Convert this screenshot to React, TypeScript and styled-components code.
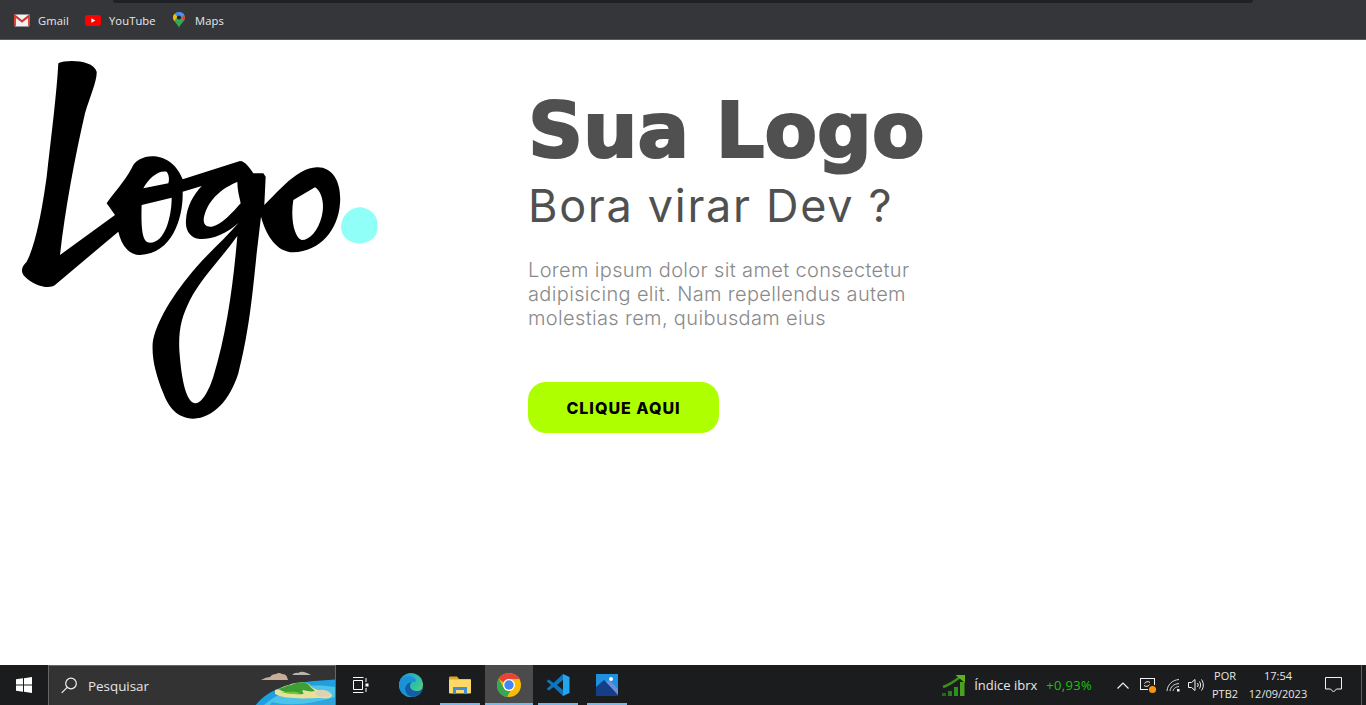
import styled, { createGlobalStyle } from "styled-components";

const GlobalStyle = createGlobalStyle`
  * { box-sizing: border-box; }
  html, body { margin: 0; height: 100%; background: #fff; }
  #root { height: 100%; }
`;

const Screen = styled.div`
  height: 705px;
  display: flex;
  flex-direction: column;
  overflow: hidden;
  font-family: "Open Sans", "Noto Sans", sans-serif;
`;

/* browser chrome */
const BrowserBar = styled.div`
  height: 40px;
  background: #35363a;
  border-bottom: 1px solid #5b5c60;
  display: flex;
  flex-direction: column;
`;
const OmniboxEdge = styled.div`
  height: 3px;
  margin: 0 113px;
  background: #202124;
  border-radius: 0 0 6px 6px;
`;
const Bookmarks = styled.div`
  flex: 1;
  display: flex;
  align-items: center;
  padding: 0 0 2px 14px;
`;
const Bookmark = styled.div<{ $width: number }>`
  width: ${(p) => p.$width}px;
  display: flex;
  align-items: center;
  gap: 8px;
  color: #e8eaed;
  font-size: 11.2px;
  letter-spacing: 0.1px;
`;
const BookmarkIcon = styled.span`
  width: 16px;
  display: flex;
  justify-content: center;
`;

/* page */
const Main = styled.main`
  flex: 1;
  display: flex;
  background: #fff;
`;
const LogoColumn = styled.div`
  width: 528px;
  padding-top: 10px;
`;
const Hero = styled.section`
  width: 410px;
  padding-top: 43px;
  font-family: Inter, "Liberation Sans", sans-serif;
`;
const Title = styled.h1`
  margin: 0;
  font-family: "DejaVu Sans", sans-serif;
  font-size: 76.5px;
  line-height: 96px;
  font-weight: 700;
  color: #505050;
  -webkit-text-stroke: 2.2px #505050;
  white-space: nowrap;
`;
const Subtitle = styled.h2`
  margin: 0;
  font-size: 45px;
  line-height: 54px;
  font-weight: 400;
  color: #505050;
  letter-spacing: 1.7px;
  white-space: nowrap;
`;
const Lorem = styled.p`
  margin: 25px 0 0;
  font-size: 20px;
  line-height: 24px;
  font-weight: 300;
  color: #8a8a8a;
  letter-spacing: 0.35px;
  white-space: nowrap;
`;
const Cta = styled.button`
  display: block;
  margin-top: 52px;
  width: 191px;
  height: 51px;
  border: 0;
  border-radius: 18px;
  background: #aeff00;
  color: #000;
  font-family: inherit;
  font-size: 16px;
  font-weight: 800;
  letter-spacing: 1px;
`;

/* windows taskbar */
const Taskbar = styled.footer`
  height: 40px;
  background: #1b1c1d;
  display: flex;
  align-items: stretch;
  color: #f2f2f2;
`;
const StartButton = styled.div`
  width: 48px;
  display: flex;
  align-items: center;
  justify-content: center;
`;
const SearchBox = styled.div`
  width: 288px;
  background: #333333;
  border: 1px solid #666;
  border-bottom: 0;
  display: flex;
  align-items: center;
  gap: 11px;
  padding-left: 12px;
  font-size: 13.4px;
  color: #e6e6e6;
  position: relative;
  overflow: hidden;
`;
const SearchArt = styled.svg`
  position: absolute;
  right: 0;
  top: 0;
`;
const TaskView = styled.div`
  width: 48px;
  display: flex;
  align-items: center;
  justify-content: center;
`;
const Apps = styled.div`
  display: flex;
  margin-left: 3px;
  gap: 1px;
`;
const AppSlot = styled.div<{ $open?: boolean; $active?: boolean }>`
  width: 48px;
  position: relative;
  display: flex;
  align-items: center;
  justify-content: center;
  background: ${(p) => (p.$active ? "#4b4b4b" : "transparent")};
  &::after {
    content: "";
    display: ${(p) => (p.$open ? "block" : "none")};
    position: absolute;
    bottom: 0;
    height: 2px;
    left: ${(p) => (p.$active ? 0 : 4)}px;
    right: ${(p) => (p.$active ? 0 : 4)}px;
    background: #76b9ed;
  }
`;
const Tray = styled.div`
  margin-left: auto;
  display: flex;
  align-items: center;
`;
const Widget = styled.div`
  display: flex;
  align-items: center;
  font-size: 13px;
  margin-right: 20px;
`;
const WidgetName = styled.span`
  margin: 0 9px 0 8px;
  color: #e6e6e6;
`;
const WidgetValue = styled.span`
  color: #16c60c;
  letter-spacing: 0.3px;
`;
const TrayIcon = styled.div<{ $width: number }>`
  width: ${(p) => p.$width}px;
  display: flex;
  justify-content: center;
  align-items: center;
`;
const NotificationSlot = styled.div`
  width: 46px;
  padding-right: 8px;
  display: flex;
  justify-content: center;
  align-items: center;
`;
const TrayText = styled.div<{ $width: number }>`
  width: ${(p) => p.$width}px;
  text-align: center;
  font-size: 11px;
  line-height: 18px;
  color: #e6e6e6;
  white-space: nowrap;
`;
const DesktopPeek = styled.div`
  width: 5px;
  align-self: stretch;
  border-left: 1px solid #5f5f5f;
  margin-left: 1px;
`;

const GmailIcon = () => (
  <svg width="16" height="13" viewBox="0 0 16 13">
    <rect x="0.5" y="0.5" width="15" height="12" rx="1" fill="#f2f2f2" />
    <path d="M1 12V2l7 5.500L15 2v10" fill="none" stroke="#d9483b" strokeWidth="2" />
    <path d="M1 1.500 8 7l7-5.500" fill="none" stroke="#c5392c" strokeWidth="1.400" />
  </svg>
);

const YoutubeIcon = () => (
  <svg width="16" height="11" viewBox="0 0 16 11">
    <rect width="16" height="11" rx="3" fill="#ff0000" />
    <path d="M6.400 3.200v4.600l4-2.300z" fill="#fff" />
  </svg>
);

const MapsIcon = () => (
  <svg width="12" height="16" viewBox="0 0 12 16">
    <path d="M6 16C5 12 0 9.500 0 5.500 0 2.500 2.700 0 6 0s6 2.500 6 5.500C12 9.500 7 12 6 16z" fill="#34a853" />
    <path d="M1.600 1.800A6 6 0 0 1 6 0l1 3.500-3 3.500z" fill="#4285f4" />
    <path d="M6 0a6 6 0 0 1 5.400 3.300L7.800 6 5 3z" fill="#4e8df5" />
    <path d="M0 5.500a5.500 5.500 0 0 1 1.600-3.700L4.500 5 1.200 9C.5 7.900 0 6.800 0 5.500z" fill="#fbbc04" />
    <path d="M11.400 3.300c.4.700.6 1.400.6 2.200 0 1.300-.6 2.500-1.300 3.500L8 6z" fill="#ea4335" />
    <circle cx="6" cy="5.500" r="2.100" fill="#23272b" />
  </svg>
);

const LogoMark = () => (
  <svg width="400" height="380" viewBox="0 0 1200 1140" style={{ display: "block" }}>
    <path
      fillRule="evenodd"
      fill="#000"
      d="M175 40C200 28 280 30 290 65C292 90 270 140 255 190C225 320 195 480 180 615L345 495L320 460C340 430 370 400 395 355C412 308 512 296 548 388L720 333C735 333 750 355 760 370L790 370L797 380L793 465C840 420 890 355 950 352C1000 350 1025 400 1020 460C1015 540 960 605 880 607C830 605 800 560 783 500L770 610C755 760 745 850 715 970C690 1050 640 1105 580 1106C530 1105 505 1070 490 1030C470 980 455 930 458 880C465 820 520 730 590 650C630 605 680 560 716 518C680 550 640 568 600 567C570 565 555 540 558 510C560 470 580 435 605 408L548 425C550 500 520 610 420 615C390 615 365 590 355 545L165 705C145 720 100 705 75 680C60 665 65 650 80 635C105 590 125 490 140 380C155 250 170 130 175 40Z
      M712 558C700 700 680 850 640 980C620 1040 600 1060 585 1060C560 1055 545 1000 538 900C535 840 545 800 570 750C600 690 660 630 712 558Z
      M430 415C445 385 475 360 500 365C508 375 508 390 505 400Z
      M425 465L515 443C515 500 495 578 450 578C430 578 422 550 425 465Z
      M712 396C680 408 632 438 615 490C605 520 615 532 635 530C665 525 700 485 722 460C718 440 712 420 712 396Z
      M880 450L945 412C965 425 975 460 965 500C955 540 930 570 905 570C885 565 870 510 880 450Z"
    />
    <path
      fill="#8ffff8"
      d="M1023 528C1025 495 1055 468 1085 472C1120 480 1135 500 1133 535C1130 570 1100 582 1070 580C1040 575 1022 555 1023 528Z"
    />
  </svg>
);

const WindowsIcon = () => (
  <svg width="16" height="16" viewBox="0 0 16 16" fill="#fff">
    <path d="M0 2.300 7 1.300V7.500H0zM8 1.150 16 0V7.500H8zM0 8.500H7V14.700L0 13.700zM8 8.500H16V16L8 14.850z" />
  </svg>
);

const SearchIcon = () => (
  <svg width="16" height="17" viewBox="0 0 16 17" fill="none" stroke="#f0f0f0" strokeWidth="1.200">
    <circle cx="10" cy="6.500" r="5.300" />
    <path d="M6.200 10.300 0.700 15.800" />
  </svg>
);

const IslandArt = () => (
  <SearchArt width="90" height="40" viewBox="0 0 90 40">
    <path d="M16 14q5-3 9-3 2-3 6-3 3-2 6 0 4 0 5 3l1 3z" fill="#c9ab98" />
    <path d="M47 9q3-3 6-2 3-2 6-1 4 1 7 3z" fill="#b9b2ad" />
    <path d="M10 40C20 26 40 18 60 16 72 14.500 82 14 90 13.500V40z" fill="#1f9fe0" />
    <path d="M18 40c10-10 28-18 46-20 10-1 18 0 26 1v19z" fill="#4cc4ea" />
    <path d="M27 36c10 3 28 3 42 0 9-2 15-3 21-5v9H24z" fill="#2ea5dc" />
    <path d="M30 24c6-1 8-4 14-5 7-3 15-3 20-1 2 3 5 5 9 6 6 0 13 2 14 5 0 3-5 4-11 3-10 0-17 1-26 0-7 0-14-1-20-4z" fill="#ecdf9a" />
    <path d="M33 23c5-1 9-4 13-4 6-3 13-3 17-1 2 3 5 5 7 7-4 1-8 0-12-1-2 2 2 3 0 4-8 1-18-1-25-5z" fill="#3c9f35" />
    <path d="M36 26c6 0 14-1 20 1-4 2-14 1-20-1z" fill="#74c63d" />
    <path d="M70 28q3-5 8-4 5 0 8 4-1 3-7 3-6 0-9-3z" fill="#ded2b4" />
  </SearchArt>
);

const TaskViewIcon = () => (
  <svg width="17" height="16" viewBox="0 0 17 16" fill="none" stroke="#fff" strokeWidth="1">
    <path d="M1 0.500h10.500M1 15.500h10.500" />
    <path d="M1.500 3.500h9v9h-9z" />
    <path d="M14 1v4M14 11v4" />
    <rect x="13.500" y="6.500" width="3" height="3" fill="#fff" stroke="none" />
  </svg>
);

const EdgeIcon = () => (
  <svg width="24" height="24" viewBox="0 0 24 24">
    <defs>
      <linearGradient id="edgeTop" x1="0" y1="0" x2="1" y2="1">
        <stop offset="0" stopColor="#1b9de2" />
        <stop offset="0.6" stopColor="#35c1a0" />
        <stop offset="1" stopColor="#6edb5c" />
      </linearGradient>
    </defs>
    <circle cx="12" cy="12" r="12" fill="url(#edgeTop)" />
    <path d="M24 13c0 3-3 5-6 5-4 0-7-2-7-5 0-2 1-3 2-4-5 0-7 4-7 7 0 4 3 8 8 8 5 0 10-4 10-11z" fill="#125fa8" />
    <path d="M0 12C0 6 5 2 11 3c4 1 6 3 6 5 0 1-2 1-4 1-5 0-7 4-7 7 0 3 2 7 6 8C5 24 0 18 0 12z" fill="#1992d8" />
  </svg>
);

const ExplorerIcon = () => (
  <svg width="22" height="18" viewBox="0 0 22 18">
    <path d="M0 1.500A1 1 0 0 1 1 .5h7l2 2.500h11a1 1 0 0 1 1 1V17H0z" fill="#e0a526" />
    <rect y="3.500" width="22" height="14" rx="1" fill="#ffd966" />
    <path d="M4 18v-7h14v7h-3v-4H7v4z" fill="#3e8ed8" />
  </svg>
);

const ChromeIcon = () => (
  <svg width="24" height="24" viewBox="0 0 24 24">
    <circle cx="12" cy="12" r="12" fill="#fbbc04" />
    <path d="M12 0a12 12 0 0 1 10.400 6H12a6 6 0 0 0-5.500 3.500L1.800 5.700A12 12 0 0 1 12 0z" fill="#ea4335" />
    <path d="M1.800 5.700 6.800 15a6 6 0 0 0 6.500 2.900L10 24A12 12 0 0 1 1.800 5.700z" fill="#34a853" />
    <circle cx="12" cy="12" r="6" fill="#fff" />
    <circle cx="12" cy="12" r="4.700" fill="#4285f4" />
  </svg>
);

const VsCodeIcon = () => (
  <svg width="24" height="24" viewBox="0 0 24 24">
    <path d="M17 1 7.500 10 3 6.500.5 8 5 12 .5 16 3 17.500 7.500 14 17 23v-6l-6-5 6-5z" fill="#0e75bd" />
    <path d="M17 1l6.500 3v16L17 23z" fill="#24a4ee" />
  </svg>
);

const PhotosIcon = () => (
  <svg width="22" height="22" viewBox="0 0 22 22">
    <rect width="22" height="22" fill="#1f8fe0" />
    <circle cx="15" cy="5" r="2" fill="#fff" />
    <path d="M0 22V13l8-7 14 13v3z" fill="#143f86" />
    <path d="M10 8l3-2 9 9v6z" fill="#6c8fdc" />
  </svg>
);

const TrendIcon = () => (
  <svg width="24" height="22" viewBox="0 0 24 22">
    <path d="M1 13C7 11 13 7 18 3" fill="none" stroke="#3c8f1a" strokeWidth="2.400" />
    <path d="M13.500 1H23v8z" fill="#5fb21f" />
    <rect x="0" y="19" width="4" height="3" fill="#1e6d12" />
    <rect x="6" y="17" width="4" height="5" fill="#26801a" />
    <rect x="12" y="13" width="4" height="9" fill="#30901c" />
    <rect x="18" y="8" width="4.500" height="14" fill="#48a41f" />
  </svg>
);

const ChevronIcon = () => (
  <svg width="12" height="7" viewBox="0 0 12 7" fill="none" stroke="#f2f2f2" strokeWidth="1.200">
    <path d="M.5 6.500 6 1l5.500 5.500" />
  </svg>
);

const SyncIcon = () => (
  <svg width="18" height="18" viewBox="0 0 18 18" fill="none" stroke="#f2f2f2" strokeWidth="1">
    <path d="M1 2.500h14.500M1.500 2.500v11M1 13.500h8M15.500 2v7" />
    <path d="M5.500 7.500c1-2 4-2.500 5.500-1M10.500 8.500c-1 2-4 2.500-5.500 1" />
    <circle cx="13.500" cy="13.500" r="3.600" fill="#f7930e" stroke="none" />
  </svg>
);

const WifiIcon = () => (
  <svg width="15" height="14" viewBox="0 0 15 14" fill="none" stroke="#d8d8d8" strokeWidth="1">
    <path d="M1 13C1.500 7 6 2 13 1.500M4 13c.5-4 3.500-7 9-7.500M7 13c.3-2 2-4 6-4.500" />
    <rect x="11" y="11" width="2.500" height="2.500" fill="#f2f2f2" stroke="none" />
  </svg>
);

const VolumeIcon = () => (
  <svg width="17" height="14" viewBox="0 0 17 14" fill="none" stroke="#f2f2f2" strokeWidth="1">
    <path d="M.5 4.500h3L7 1.500v11l-3.500-3h-3z" />
    <path d="M9.500 5c.8 1.300.8 2.700 0 4M11.500 3.500c1.400 2 1.400 5 0 7M13.500 1.500c2.400 3.200 2.400 7.800 0 11" />
  </svg>
);

const NotificationIcon = () => (
  <svg width="17" height="16" viewBox="0 0 17 16" fill="none" stroke="#f2f2f2" strokeWidth="1">
    <path d="M.5.500h16v11.500h-5l-3 3-3-3h-5z" />
  </svg>
);

const openApps = [
  { id: "explorer", icon: <ExplorerIcon /> },
  { id: "chrome", icon: <ChromeIcon />, active: true },
  { id: "vscode", icon: <VsCodeIcon /> },
  { id: "photos", icon: <PhotosIcon /> },
];

export default function App() {
  return (
    <Screen>
      <GlobalStyle />
      <BrowserBar>
        <OmniboxEdge />
        <Bookmarks>
          <Bookmark $width={71}><BookmarkIcon><GmailIcon /></BookmarkIcon>Gmail</Bookmark>
          <Bookmark $width={86}><BookmarkIcon><YoutubeIcon /></BookmarkIcon>YouTube</Bookmark>
          <Bookmark $width={60}><BookmarkIcon><MapsIcon /></BookmarkIcon>Maps</Bookmark>
        </Bookmarks>
      </BrowserBar>

      <Main>
        <LogoColumn>
          <LogoMark />
        </LogoColumn>
        <Hero>
          <Title>Sua Logo</Title>
          <Subtitle>Bora virar Dev ?</Subtitle>
          <Lorem>
            Lorem ipsum dolor sit amet consectetur
            <br />
            adipisicing elit. Nam repellendus autem
            <br />
            molestias rem, quibusdam eius
          </Lorem>
          <Cta>CLIQUE AQUI</Cta>
        </Hero>
      </Main>

      <Taskbar>
        <StartButton><WindowsIcon /></StartButton>
        <SearchBox>
          <SearchIcon />
          Pesquisar
          <IslandArt />
        </SearchBox>
        <TaskView><TaskViewIcon /></TaskView>
        <Apps>
          <AppSlot><EdgeIcon /></AppSlot>
          {openApps.map((app) => (
            <AppSlot key={app.id} $open $active={app.active}>{app.icon}</AppSlot>
          ))}
        </Apps>
        <Tray>
          <Widget>
            <TrendIcon />
            <WidgetName>Índice ibrx</WidgetName>
            <WidgetValue>+0,93%</WidgetValue>
          </Widget>
          <TrayIcon $width={22}><ChevronIcon /></TrayIcon>
          <TrayIcon $width={28}><SyncIcon /></TrayIcon>
          <TrayIcon $width={22}><WifiIcon /></TrayIcon>
          <TrayIcon $width={24}><VolumeIcon /></TrayIcon>
          <TrayText $width={34}>POR<br />PTB2</TrayText>
          <TrayText $width={72}>17:54<br />12/09/2023</TrayText>
          <NotificationSlot><NotificationIcon /></NotificationSlot>
          <DesktopPeek />
        </Tray>
      </Taskbar>
    </Screen>
  );
}
